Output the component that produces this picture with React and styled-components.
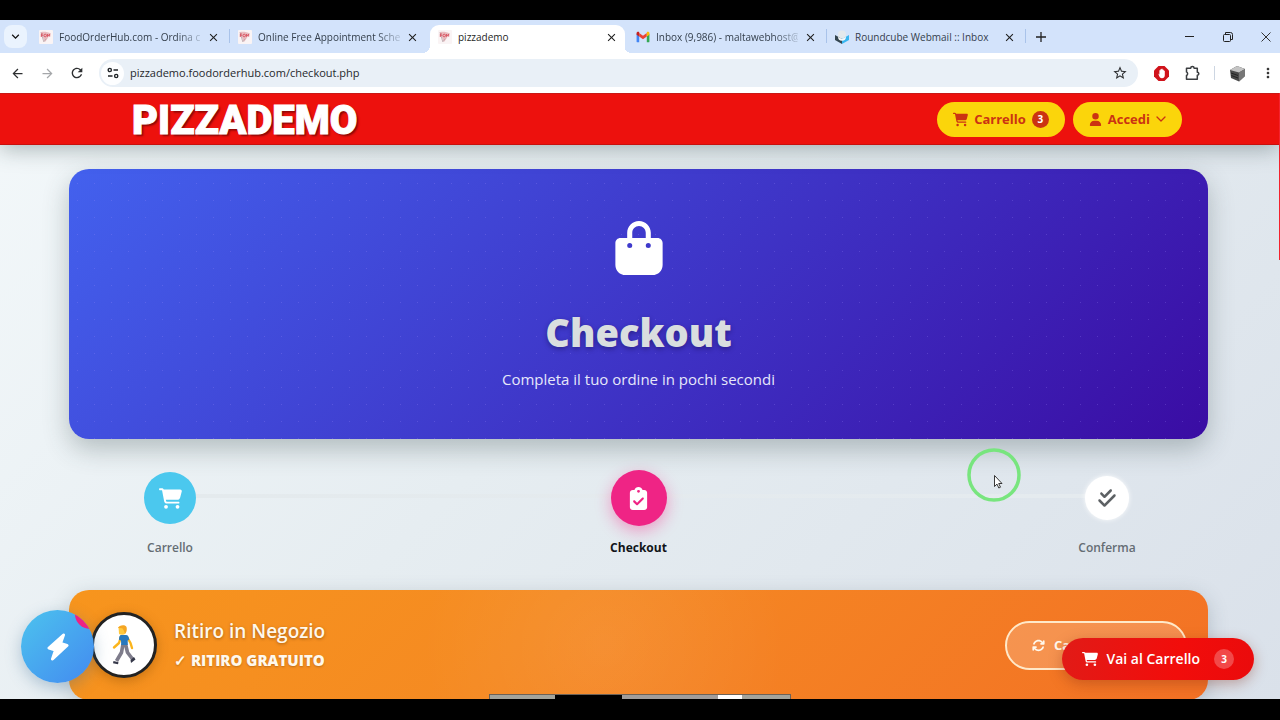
import React from "react"
import styled, { createGlobalStyle, css } from "styled-components"
import {
  FaArrowsRotate,
  FaBagShopping,
  FaCartShopping,
  FaCheckDouble,
  FaClipboardCheck,
  FaUser,
} from "react-icons/fa6"
import {
  MdArrowBack,
  MdArrowForward,
  MdClose,
  MdKeyboardArrowDown,
  MdMoreVert,
  MdRefresh,
  MdStarBorder,
} from "react-icons/md"

const GlobalStyle = createGlobalStyle`
  * {
    box-sizing: border-box;
  }
  body {
    margin: 0;
    background: #000;
    font-family: "Open Sans", "Noto Sans", sans-serif;
  }
  button, input {
    font-family: inherit;
  }
  button {
    border: 0;
    padding: 0;
    background: none;
    color: inherit;
    cursor: pointer;
  }
  svg {
    display: block;
    flex: none;
  }
`

const Screen = styled.div`
  height: 100vh;
  padding: 20px 0 21px;
  display: flex;
  flex-direction: column;
  background: #000;
`

/* browser chrome */

const TabStrip = styled.div`
  height: 33px;
  padding-left: 4px;
  display: flex;
  align-items: stretch;
  background: #d3e3fb;
`
const TabSearch = styled.button`
  width: 23px;
  height: 23px;
  margin: 5px 4px 0 0;
  display: flex;
  align-items: center;
  justify-content: center;
  border-radius: 8px;
  background: #eaf3fe;
  color: #111;
`
const Tab = styled.div`
  flex: 0 1 199px;
  min-width: 0;
  margin-top: 5px;
  padding: 0 8px 4px 8px;
  display: flex;
  align-items: center;
  gap: 6px;
  color: #35404d;
  border-right: 1px solid transparent;

  ${({ $divider }) => $divider && css`
    border-image: linear-gradient(transparent 5px, #a9c3ea 5px, #a9c3ea 18px, transparent 18px) 1;
    border-style: solid;
    border-width: 0 1px 0 0;
  `}

  ${({ $active }) => $active && css`
    position: relative;
    margin-left: 1px;
    margin-right: 3px;
    flex-basis: 195px;
    padding-right: 5px;
    border-radius: 9px 9px 0 0;
    background: #fff;
    color: #1f1f1f;

    &::before,
    &::after {
      content: "";
      position: absolute;
      bottom: 0;
      width: 8px;
      height: 8px;
    }
    &::before {
      right: 100%;
      background: radial-gradient(circle at 0 0, transparent 8px, #fff 8px);
    }
    &::after {
      left: 100%;
      background: radial-gradient(circle at 100% 0, transparent 8px, #fff 8px);
    }
  `}
`
const TabTitle = styled.span`
  flex: 1;
  min-width: 0;
  white-space: nowrap;
  font-size: 10px;
  line-height: 16px;
  font-weight: 500;
  mask-image: ${({ $fade }) => ($fade ? "linear-gradient(to right, #000 calc(100% - 24px), rgba(0, 0, 0, 0.2))" : "none")};
`
const TabClose = styled.button`
  width: 14px;
  color: #1f1f1f;
`
const NewTab = styled.button`
  width: 28px;
  margin: 1px 0 0 1px;
  display: flex;
  align-items: center;
  justify-content: center;
`
const WindowControls = styled.div`
  margin-left: auto;
  display: flex;
`
const WindowButton = styled.button`
  width: 38px;
  display: flex;
  align-items: center;
  justify-content: center;

  &:last-child {
    margin-right: -5px;
  }
`

const Toolbar = styled.div`
  height: 40px;
  padding: 0 4px 0 9px;
  display: flex;
  align-items: center;
  background: #fff;
  color: #333;
`
const ToolButton = styled.button`
  width: 16px;
  height: 16px;
  margin-right: 14px;
  display: flex;
  align-items: center;
  justify-content: center;
  color: ${({ $dim }) => ($dim ? "#a5a7aa" : "#2d2f31")};
`
const AddressBar = styled.div`
  flex: 1;
  height: 28px;
  padding: 0 10px 0 2px;
  display: flex;
  align-items: center;
  gap: 6px;
  border-radius: 14px;
  background: #e9f0f7;
`
const SiteInfo = styled.button`
  width: 23px;
  height: 23px;
  display: flex;
  align-items: center;
  justify-content: center;
  border-radius: 50%;
  background: #fdfeff;
`
const AddressInput = styled.input`
  flex: 1;
  min-width: 0;
  padding: 0;
  border: 0;
  outline: 0;
  background: none;
  color: #26292c;
  font-size: 11px;
  line-height: 18px;
  font-weight: 500;
`
const Extensions = styled.div`
  padding-left: 16px;
  display: flex;
  align-items: center;
  gap: 14px;
`
const ToolDivider = styled.span`
  width: 1px;
  height: 14px;
  background: #cdd6e2;
`

/* page */

const Page = styled.div`
  flex: 1;
  min-height: 0;
  position: relative;
  overflow: hidden;
  padding-right: 3px;
  background: linear-gradient(135deg, #f3f8fa 0%, #e6edf1 45%, #dae1ea 100%);
`
const ScrollThumb = styled.div`
  position: absolute;
  z-index: 1;
  top: 0;
  right: 0;
  width: 1px;
  height: 167px;
  background: #f5222d;
`
const SiteHeader = styled.header`
  position: relative;
  min-height: 52px;
  margin-right: -2px;
  padding: 0 97px 0 132px;
  display: flex;
  align-items: center;
  justify-content: space-between;
  background: #ed110d;
  border-top: 1px solid #c81a17;
  border-bottom: 1px solid #c8100d;
  box-shadow: 0 4px 22px rgba(40, 60, 60, 0.36);
`
const Brand = styled.a`
  padding-top: 3px;
  color: #fff;
  font-family: Roboto, "Open Sans", sans-serif;
  font-size: 40px;
  line-height: 46px;
  font-weight: 900;
  text-decoration: none;
  text-shadow: 2px 2px 2px rgba(70, 0, 0, 0.6);
  -webkit-text-stroke: 1px #fff;
`
const HeaderNav = styled.nav`
  display: flex;
  gap: 8px;
`
const PillButton = styled.button`
  height: 35px;
  padding: 0 16px;
  display: flex;
  align-items: center;
  gap: 6px;
  border-radius: 18px;
  background: #fbd50b;
  color: #cb3312;
  font-size: 13px;
  line-height: 18px;
  font-weight: 700;
`
const Count = styled.span`
  width: ${({ $size }) => $size}px;
  height: ${({ $size }) => $size}px;
  margin-left: ${({ $gap }) => $gap || 0}px;
  display: flex;
  align-items: center;
  justify-content: center;
  border-radius: 50%;
  background: ${({ $bg }) => $bg};
  color: #fff;
  font-size: 10px;
  font-weight: 700;
`
const Container = styled.main`
  max-width: 1139px;
  margin: 0 auto;
  padding-top: 24px;
`
const Hero = styled.section`
  min-height: 270px;
  padding: 52px 20px 40px;
  display: flex;
  flex-direction: column;
  align-items: center;
  border-radius: 20px;
  background:
    radial-gradient(circle, rgba(170, 150, 255, 0.24) 0, transparent 1px) 0 6px / 17px 17px,
    linear-gradient(135deg, #4361ee 0%, #3a0ca3 100%);
  box-shadow: 0 10px 26px rgba(50, 70, 70, 0.3);
  color: #fff;
`
const HeroTitle = styled.h1`
  margin: 31px 0 0;
  color: #d9dedf;
  font-size: 38px;
  line-height: 52px;
  font-weight: 800;
  text-shadow: 0 2px 5px rgba(20, 10, 70, 0.45);
`
const HeroText = styled.p`
  margin: 9px 0 0;
  color: #e6e7fa;
  font-size: 15px;
  line-height: 24px;
  font-weight: 500;
`
const Steps = styled.ol`
  position: relative;
  margin: 31px 0 0;
  padding: 0 50px;
  display: flex;
  justify-content: space-between;
  list-style: none;

  &::before {
    content: "";
    position: absolute;
    top: 24px;
    left: 120px;
    right: 120px;
    height: 4px;
    background: linear-gradient(to right, #e4eaed, #e5ebef);
  }
`
const Step = styled.li`
  position: relative;
  width: 102px;
  display: flex;
  flex-direction: column;
  align-items: center;
  color: ${({ $current }) => ($current ? "#111418" : "#656d74")};
  font-size: 12px;
  line-height: 18px;
  font-weight: ${({ $current }) => ($current ? 700 : 600)};
`
const StepMark = styled.div`
  height: 56px;
  margin-bottom: 13px;
  display: flex;
  align-items: center;
`
const StepCircle = styled.span`
  width: ${({ $size }) => $size}px;
  height: ${({ $size }) => $size}px;
  display: flex;
  align-items: center;
  justify-content: center;
  border-radius: 50%;
  background: ${({ $bg }) => $bg};
  color: ${({ $color }) => $color || "#fff"};
  box-shadow: ${({ $glow }) => $glow || "none"};
`
const Pickup = styled.section`
  min-height: 110px;
  margin-top: 33px;
  padding: 0 21px 0 22px;
  display: flex;
  align-items: center;
  gap: 17px;
  border-radius: 20px;
  background:
    radial-gradient(circle at 47% 50%, rgba(255, 255, 255, 0.07), transparent 30%),
    linear-gradient(135deg, #f7951d 0%, #f58a22 40%, #f37125 100%);
  box-shadow: 0 6px 20px rgba(60, 80, 90, 0.25);
  color: #fff8ec;
`
const PickupIcon = styled.div`
  width: 66px;
  height: 66px;
  display: flex;
  align-items: center;
  justify-content: center;
  border: 3px solid #222;
  border-radius: 50%;
  background: #fff;
  box-shadow: 0 3px 12px rgba(110, 60, 0, 0.35);
`
const PickupTitle = styled.h2`
  margin: 0 0 6px;
  font-size: 19px;
  line-height: 26px;
  font-weight: 600;
  text-shadow: 0 1px 3px rgba(90, 50, 0, 0.5);
`
const PickupNote = styled.p`
  margin: 0;
  padding-bottom: 2px;
  font-size: 15px;
  line-height: 20px;
  font-weight: 800;
  text-shadow: 0 1px 2px rgba(90, 50, 0, 0.35);
`
const ChangeButton = styled.button`
  width: 182px;
  height: 49px;
  margin-left: auto;
  padding: 0 25px;
  display: flex;
  align-items: center;
  gap: 9px;
  border: 2px solid #ffe9c9;
  border-radius: 25px;
  background: rgba(255, 255, 255, 0.2);
  font-size: 13px;
  font-weight: 700;
`

/* floating over the page */

const QuickButton = styled.button`
  position: absolute;
  left: 21px;
  bottom: 16px;
  width: 73px;
  height: 73px;
  display: flex;
  align-items: center;
  justify-content: center;
  overflow: hidden;
  border-radius: 50%;
  background: linear-gradient(135deg, #4cc3ee, #438af0);
  box-shadow: 0 5px 16px rgba(60, 110, 150, 0.35);
  color: #fff;

  &::after {
    content: "";
    position: absolute;
    top: -11px;
    right: -11px;
    width: 30px;
    height: 30px;
    border-radius: 50%;
    background: #ee2183;
  }
`
const CartButton = styled.button`
  position: absolute;
  right: 26px;
  bottom: 19px;
  height: 42px;
  padding: 0 20px;
  display: flex;
  align-items: center;
  gap: 8px;
  border-radius: 21px;
  background: linear-gradient(100deg, #e11b17, #f20d0b 60%, #ea0b0c);
  box-shadow: 0 4px 14px rgba(130, 40, 20, 0.35);
  color: #fff;
  font-size: 14px;
  line-height: 20px;
  font-weight: 600;
`
const Pointer = styled.div`
  position: absolute;
  top: 355px;
  left: 967px;
  pointer-events: none;
`
const Strip = styled.div`
  position: absolute;
  bottom: 0;
  left: 489px;
  width: 302px;
  height: 5px;
  display: flex;
  border: 1px solid #6d6257;
  border-bottom: 0;
`
const StripPart = styled.span`
  flex: ${({ $grow }) => $grow};
  background: ${({ $bg }) => $bg};
`

const FoodIcon = () => (
  <svg width="14" height="14" viewBox="0 0 14 14">
    <rect width="14" height="14" rx="1" fill="#faf4f5" />
    <path d="M1.500 2.200c3-.9 7-.4 10.500 1.300L6 12z" fill="#e9bcc0" />
    <path d="M2 2.500l2.800 9.300 2.500-3.200" fill="none" stroke="#b9a3a8" strokeWidth=".8" />
    <path d="M2 4h2M2.300 5.600h1.500M2.300 4v3M8.500 6.800V4.200l1 1.500 1.200-1.500v2.400" fill="none" stroke="#d8505e" strokeWidth=".9" />
    <circle cx="6.200" cy="5.500" r="1.300" fill="none" stroke="#d8505e" strokeWidth=".9" />
  </svg>
)

const GmailIcon = () => (
  <svg width="14" height="14" viewBox="0 0 24 24">
    <path d="M1 20V7l4.500 3.500V21H2.500A1.500 1.500 0 0 1 1 20z" fill="#4285f4" />
    <path d="M18.500 21V10.500L23 7v12.500a1.500 1.500 0 0 1-1.500 1.500z" fill="#34a853" />
    <path d="M5.500 11V5l6.500 5 6.500-5v6L12 16z" fill="#ea4335" />
    <path d="M1 8V5.500C1 3 3.600 2.200 5.500 3.600V11z" fill="#c5221f" />
    <path d="M23 8V5.500c0-2.500-2.600-3.300-4.500-1.900V11z" fill="#fbbc04" />
  </svg>
)

const RoundcubeIcon = () => (
  <svg width="14" height="14" viewBox="0 0 14 14">
    <circle cx="7" cy="4.500" r="4" fill="#e4e9ec" />
    <path d="M0 5l7 4v5L0 10z" fill="#33454f" />
    <path d="M14 5L7 9v5l7-4z" fill="#38b6f0" />
    <path d="M3 6.700a4 4 0 0 0 8 0L7 9z" fill="#f5f8f9" />
  </svg>
)

const TuneIcon = () => (
  <svg width="12" height="12" viewBox="0 0 12 12" fill="none" stroke="#202428" strokeWidth="1.400">
    <circle cx="2.800" cy="3" r="1.600" />
    <path d="M6.500 3H11M1 9h4.500" />
    <circle cx="9.200" cy="9" r="1.600" />
  </svg>
)

const BlockerIcon = () => (
  <svg width="15" height="15" viewBox="0 0 15 15">
    <path d="M4.500 0h6L15 4.500v6L10.500 15h-6L0 10.500v-6z" fill="#d0131b" />
    <path d="M4.300 7.500l1.100 1V4.300h1V3.200h1.100v-.5h1.100v1h1.200v1h1v4.500c0 2-1.200 3-2.800 3-1.900 0-2.700-1.200-3.700-4.700z" fill="#fff" />
  </svg>
)

const PuzzleIcon = () => (
  <svg width="17" height="16" viewBox="0 0 17 16" fill="none" stroke="#3a3d40" strokeWidth="1.500" strokeLinejoin="round">
    <path d="M3.500 3.200h4.200a1.700 1.700 0 0 1 3.400 0h3.200v4a1.500 1.500 0 0 1 0 3v4H3.500v-3.700a2 2 0 0 0 0-3.600z" />
  </svg>
)

const AvatarIcon = () => (
  <svg width="17" height="17" viewBox="0 0 17 17">
    <path d="M1 5l7-4 8 3v7l-6 5.500L2 13z" fill="#4a4a4a" />
    <path d="M1 5l7-4 8 3-6 3.500z" fill="#c4c4c4" />
    <path d="M10 7.500L16 4v7l-6 5.500z" fill="#777" />
    <path d="M2 8l7 2.500M2.300 10.500L9 13" stroke="#222" />
  </svg>
)

const PlusIcon = () => (
  <svg width="10" height="10" viewBox="0 0 10 10" stroke="#222" strokeWidth="1.300">
    <path d="M5 0v10M0 5h10" />
  </svg>
)

const ChevronIcon = () => (
  <svg width="10" height="10" viewBox="0 0 10 10" fill="none" stroke="currentColor" strokeWidth="1.300" strokeLinecap="round" strokeLinejoin="round">
    <path d="M1 3l4 4 4-4" />
  </svg>
)

const BoltIcon = () => (
  <svg width="22" height="28" viewBox="0 0 22 28" fill="currentColor" stroke="currentColor" strokeWidth="3" strokeLinejoin="round">
    <path d="M16.500 2L2 15l6.500 2L5.500 26 20 12.500l-6.500-2z" />
  </svg>
)

const Walker = () => (
  <svg width="24" height="40" viewBox="0 0 24 40">
    <path d="M9 11.500L7 18l-5 4.500M15 12l3.500 6 1.500 5" fill="none" stroke="#fbb51d" strokeWidth="2.400" strokeLinecap="round" strokeLinejoin="round" />
    <path d="M11 19l-1.500 8.500L4.500 36M13.500 19l2 8.500 5 6.500" fill="none" stroke="#7e7c8b" strokeWidth="3.600" strokeLinejoin="round" />
    <path d="M1.500 36l5 1.300-.5 2-5-1zM18.500 35l3.500-3 1.500 2.500-4.500 3.500z" fill="#353849" />
    <path d="M9 10h5c2 0 2.800 2 3.300 4.500l-1.600 1 .1 4.500H9.200L9 15.500l-2-.8c0-2.500.5-4.700 2-4.700z" fill="#2878bd" />
    <path d="M6.500 2h7v6.500c-1 1.300-5.500 1.800-6.500.3z" fill="#ffc83d" />
    <path d="M6 3C6.500 0 13.500-1 14.500 2c.8 3-.2 6-1.500 6.500l-1.500-3.500-1.200-1.700z" fill="#f5a623" />
  </svg>
)

const tabs = [
  { title: "FoodOrderHub.com - Ordina ci", icon: <FoodIcon />, divider: true, fade: true },
  { title: "Online Free Appointment Sched", icon: <FoodIcon />, fade: true },
  { title: "pizzademo", icon: <FoodIcon />, active: true },
  { title: "Inbox (9,986) - maltawebhost@", icon: <GmailIcon />, divider: true, fade: true },
  { title: "Roundcube Webmail :: Inbox", icon: <RoundcubeIcon />, divider: true },
]

const BrowserTabs = () => (
  <TabStrip>
    <TabSearch aria-label="Search tabs">
      <MdKeyboardArrowDown size={15} />
    </TabSearch>
    {tabs.map(tab => (
      <Tab key={tab.title} $active={tab.active} $divider={tab.divider}>
        {tab.icon}
        <TabTitle $fade={tab.fade}>{tab.title}</TabTitle>
        <TabClose aria-label="Close tab">
          <MdClose size={13} />
        </TabClose>
      </Tab>
    ))}
    <NewTab aria-label="New tab">
      <PlusIcon />
    </NewTab>
    <WindowControls>
      <WindowButton aria-label="Minimize">
        <svg width="10" height="10" viewBox="0 0 10 10" stroke="#222">
          <path d="M0 4.500h9" />
        </svg>
      </WindowButton>
      <WindowButton aria-label="Restore">
        <svg width="10" height="10" viewBox="0 0 10 10" fill="none" stroke="#222">
          <rect x=".5" y="2.500" width="7" height="7" rx="1" />
          <path d="M2.500 2V.500h5a2 2 0 0 1 2 2v5H8" />
        </svg>
      </WindowButton>
      <WindowButton aria-label="Close">
        <svg width="10" height="10" viewBox="0 0 10 10" stroke="#333">
          <path d="M.5.500l9 9M9.500.500l-9 9" />
        </svg>
      </WindowButton>
    </WindowControls>
  </TabStrip>
)

const BrowserToolbar = () => (
  <Toolbar>
    <ToolButton aria-label="Back"><MdArrowBack size={15} /></ToolButton>
    <ToolButton aria-label="Forward" $dim><MdArrowForward size={15} /></ToolButton>
    <ToolButton aria-label="Reload"><MdRefresh size={16} /></ToolButton>
    <AddressBar>
      <SiteInfo aria-label="Site information"><TuneIcon /></SiteInfo>
      <AddressInput aria-label="Address" defaultValue="pizzademo.foodorderhub.com/checkout.php" />
      <button aria-label="Bookmark"><MdStarBorder size={16} color="#2d2f31" /></button>
    </AddressBar>
    <Extensions>
      <button aria-label="Ad blocker"><BlockerIcon /></button>
      <button aria-label="Extensions"><PuzzleIcon /></button>
      <ToolDivider />
      <button aria-label="Profile"><AvatarIcon /></button>
      <button aria-label="Menu"><MdMoreVert size={16} /></button>
    </Extensions>
  </Toolbar>
)

const App = () => (
  <>
    <GlobalStyle />
    <Screen>
      <BrowserTabs />
      <BrowserToolbar />
      <Page>
        <SiteHeader>
          <Brand href="#">PIZZADEMO</Brand>
          <HeaderNav>
            <PillButton>
              <FaCartShopping size={15} />
              Carrello
              <Count $size={17} $bg="#cb3312">3</Count>
            </PillButton>
            <PillButton>
              <FaUser size={13} />
              Accedi
              <ChevronIcon />
            </PillButton>
          </HeaderNav>
        </SiteHeader>
        <ScrollThumb />
        <Container>
          <Hero>
            <FaBagShopping size={54} />
            <HeroTitle>Checkout</HeroTitle>
            <HeroText>Completa il tuo ordine in pochi secondi</HeroText>
          </Hero>
          <Steps>
            <Step>
              <StepMark>
                <StepCircle $size={52} $bg="#4bc8ee"><FaCartShopping size={23} /></StepCircle>
              </StepMark>
              Carrello
            </Step>
            <Step $current>
              <StepMark>
                <StepCircle $size={56} $bg="#ef2485" $glow="0 5px 16px rgba(247, 37, 133, 0.4)">
                  <FaClipboardCheck size={23} />
                </StepCircle>
              </StepMark>
              Checkout
            </Step>
            <Step>
              <StepMark>
                <StepCircle $size={44} $bg="#fff" $color="#5d6164" $glow="0 0 5px rgba(255, 255, 255, 0.9)">
                  <FaCheckDouble size={20} />
                </StepCircle>
              </StepMark>
              Conferma
            </Step>
          </Steps>
          <Pickup>
            <PickupIcon><Walker /></PickupIcon>
            <div>
              <PickupTitle>Ritiro in Negozio</PickupTitle>
              <PickupNote>✓ RITIRO GRATUITO</PickupNote>
            </div>
            <ChangeButton>
              <FaArrowsRotate size={13} />
              Cambia
            </ChangeButton>
          </Pickup>
        </Container>
        <QuickButton aria-label="Azioni rapide">
          <BoltIcon />
        </QuickButton>
        <CartButton>
          <FaCartShopping size={16} />
          Vai al Carrello
          <Count $size={20} $gap={6} $bg="rgba(255, 255, 255, 0.25)">3</Count>
        </CartButton>
        <Pointer>
          <svg width="54" height="54" viewBox="0 0 54 54">
            <circle cx="27" cy="27" r="25" fill="none" stroke="#78e57e" strokeWidth="3.500" />
            <path d="M27.500 27.500v11l2.500-2.400 1.800 3.900 1.700-.8-1.800-3.700H35z" fill="#fff" stroke="#222" strokeWidth=".9" />
          </svg>
        </Pointer>
        <Strip>
          <StripPart $grow={65} $bg="#a3a49c" />
          <StripPart $grow={67} $bg="#000" />
          <StripPart $grow={96} $bg="#a09d9b" />
          <StripPart $grow={24} $bg="#fff" />
          <StripPart $grow={48} $bg="#a3a49c" />
        </Strip>
      </Page>
    </Screen>
  </>
)

export default App
